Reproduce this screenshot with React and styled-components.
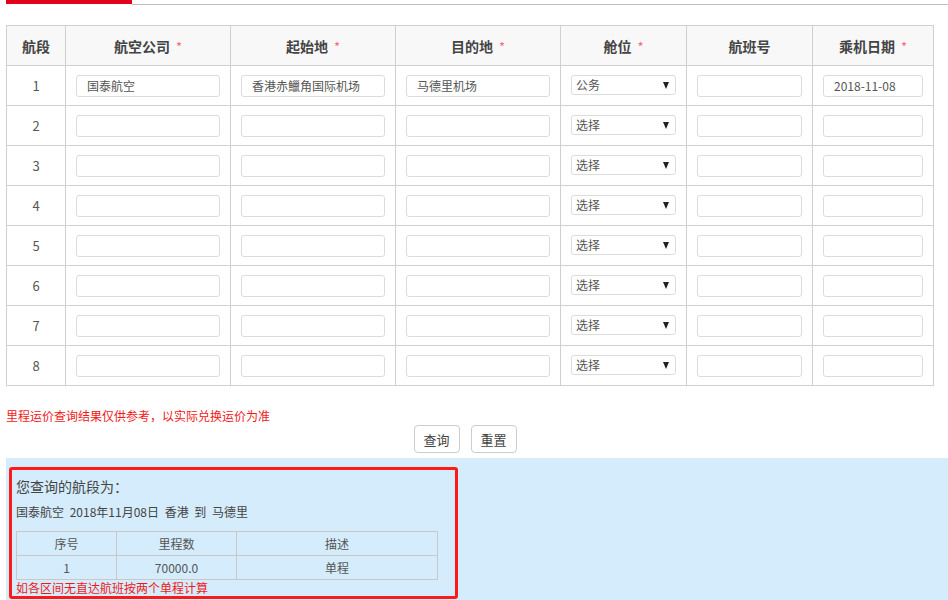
import React from "react";
import styled, { createGlobalStyle } from "styled-components";

const Global = createGlobalStyle`
  html, body { margin: 0; padding: 0; background: #fff; }
  body {
    font-family: "Microsoft YaHei", "Noto Sans CJK SC", "Noto Sans", sans-serif;
    color: #555;
    overflow: hidden;
  }
  * { box-sizing: border-box; }
`;

const Page = styled.div`
  padding-left: 6px;
  width: 948px;
`;

const TabBar = styled.div`
  display: flex;
  height: 5px;
`;

const ActiveTab = styled.div`
  width: 126px;
  height: 4px;
  background: #e2001a;
`;

const TabLine = styled.div`
  flex: 1;
  border-bottom: 1px solid #bdbdbd;
`;

const Grid = styled.table`
  margin-top: 20px;
  width: 927px;
  border-collapse: collapse;
  table-layout: fixed;
  border: 1px solid #d0d0d0;
`;

const HeadCell = styled.th`
  height: 40px;
  background: #f8f8f8;
  border: 1px solid #d0d0d0;
  font-size: 14px;
  font-weight: bold;
  color: #444;
  text-align: center;
  padding: 0;
`;

const Star = styled.span`
  color: #f46a80;
  font-size: 13px;
  font-weight: normal;
  margin-left: 6px;
`;

const Cell = styled.td`
  height: 40px;
  border: 1px solid #d0d0d0;
  text-align: center;
  vertical-align: middle;
  font-size: 13px;
  color: #555;
  padding: 0;
`;

const Field = styled.input`
  display: block;
  margin: 0 auto;
  width: ${(p) => p.$w}px;
  height: 22px;
  border: 1px solid #dcdcdc;
  border-radius: 3px;
  padding: 0 0 0 10px;
  font-family: inherit;
  font-size: 12px;
  color: #555;
  background: #fff;
  outline: none;
`;

const SelectWrap = styled.div`
  position: relative;
  width: 105px;
  height: 20px;
  margin: -2px auto 0;
`;

const Select = styled.select`
  appearance: none;
  -webkit-appearance: none;
  width: 105px;
  height: 20px;
  border: 1px solid #dcdcdc;
  border-radius: 3px;
  padding: 0 0 0 4px;
  font-family: inherit;
  font-size: 12px;
  color: #555;
  background: #fff;
  outline: none;
  display: block;
`;

const Arrow = styled.span`
  position: absolute;
  right: 7px;
  top: 7px;
  width: 0;
  height: 0;
  border-left: 3.5px solid transparent;
  border-right: 3.5px solid transparent;
  border-top: 7px solid #222;
  pointer-events: none;
`;

const Note = styled.div`
  margin-top: 21px;
  font-size: 12px;
  line-height: 18px;
  color: #f21818;
`;

const ButtonRow = styled.div`
  display: flex;
  justify-content: center;
  gap: 11px;
  padding-right: 24px;
`;

const Button = styled.button`
  width: 46px;
  height: 28px;
  border: 1px solid #ccc;
  border-radius: 4px;
  background: #fff;
  font-family: inherit;
  font-size: 13px;
  color: #444;
  padding: 0;
`;

const ResultArea = styled.div`
  margin-top: 5px;
  background: #d4ecfc;
  padding: 9px 0 10px 3px;
`;

const ResultBox = styled.div`
  width: 449px;
  height: 132px;
  border: 3px solid #ff1a1a;
  border-radius: 3px;
  padding: 6px 0 0 4px;
`;

const ResultTitle = styled.div`
  font-size: 14px;
  line-height: 20px;
  color: #444;
`;

const ResultSub = styled.div`
  margin-top: 7px;
  font-size: 12px;
  line-height: 18px;
  color: #444;
  word-spacing: 3px;
`;

const MiniTable = styled.table`
  margin-top: 10px;
  width: 421px;
  border-collapse: collapse;
  table-layout: fixed;
`;

const MiniCell = styled.td`
  height: 24px;
  border: 1px solid #c8c8c8;
  text-align: center;
  font-size: 12px;
  color: #555;
  padding: 0;
`;

const Warn = styled.div`
  font-size: 12px;
  line-height: 16px;
  color: #f21818;
`;

const columns = [
  { label: "航段", width: 59 },
  { label: "航空公司", width: 165, req: true },
  { label: "起始地", width: 165, req: true },
  { label: "目的地", width: 165, req: true },
  { label: "舱位", width: 126, req: true },
  { label: "航班号", width: 126 },
  { label: "乘机日期", width: 121, req: true },
];

const rows = [
  { airline: "国泰航空", from: "香港赤鱲角国际机场", to: "马德里机场", cabin: "公务", date: "2018-11-08" },
  ...Array.from({ length: 7 }, () => ({ airline: "", from: "", to: "", cabin: "选择", date: "" })),
];

export default function App() {
  return (
    <>
      <Global />
      <Page>
        <TabBar>
          <ActiveTab />
          <TabLine />
        </TabBar>
        <Grid>
          <colgroup>
            {columns.map((c) => (
              <col key={c.label} style={{ width: c.width }} />
            ))}
          </colgroup>
          <thead>
            <tr>
              {columns.map((c) => (
                <HeadCell key={c.label}>
                  {c.label}
                  {c.req && <Star>*</Star>}
                </HeadCell>
              ))}
            </tr>
          </thead>
          <tbody>
            {rows.map((r, i) => (
              <tr key={i}>
                <Cell>{i + 1}</Cell>
                <Cell><Field $w={144} defaultValue={r.airline} /></Cell>
                <Cell><Field $w={144} defaultValue={r.from} /></Cell>
                <Cell><Field $w={144} defaultValue={r.to} /></Cell>
                <Cell>
                  <SelectWrap>
                    <Select defaultValue={r.cabin}>
                      <option>{r.cabin}</option>
                    </Select>
                    <Arrow />
                  </SelectWrap>
                </Cell>
                <Cell><Field $w={105} defaultValue="" /></Cell>
                <Cell><Field $w={100} defaultValue={r.date} /></Cell>
              </tr>
            ))}
          </tbody>
        </Grid>
        <Note>里程运价查询结果仅供参考，以实际兑换运价为准</Note>
        <ButtonRow>
          <Button>查询</Button>
          <Button>重置</Button>
        </ButtonRow>
        <ResultArea>
          <ResultBox>
            <ResultTitle>您查询的航段为：</ResultTitle>
            <ResultSub>国泰航空 2018年11月08日 香港 到 马德里</ResultSub>
            <MiniTable>
              <colgroup>
                <col style={{ width: 100 }} />
                <col style={{ width: 120 }} />
                <col style={{ width: 201 }} />
              </colgroup>
              <tbody>
                <tr>
                  <MiniCell>序号</MiniCell>
                  <MiniCell>里程数</MiniCell>
                  <MiniCell>描述</MiniCell>
                </tr>
                <tr>
                  <MiniCell>1</MiniCell>
                  <MiniCell>70000.0</MiniCell>
                  <MiniCell>单程</MiniCell>
                </tr>
              </tbody>
            </MiniTable>
            <Warn>如各区间无直达航班按两个单程计算</Warn>
          </ResultBox>
        </ResultArea>
      </Page>
    </>
  );
}
